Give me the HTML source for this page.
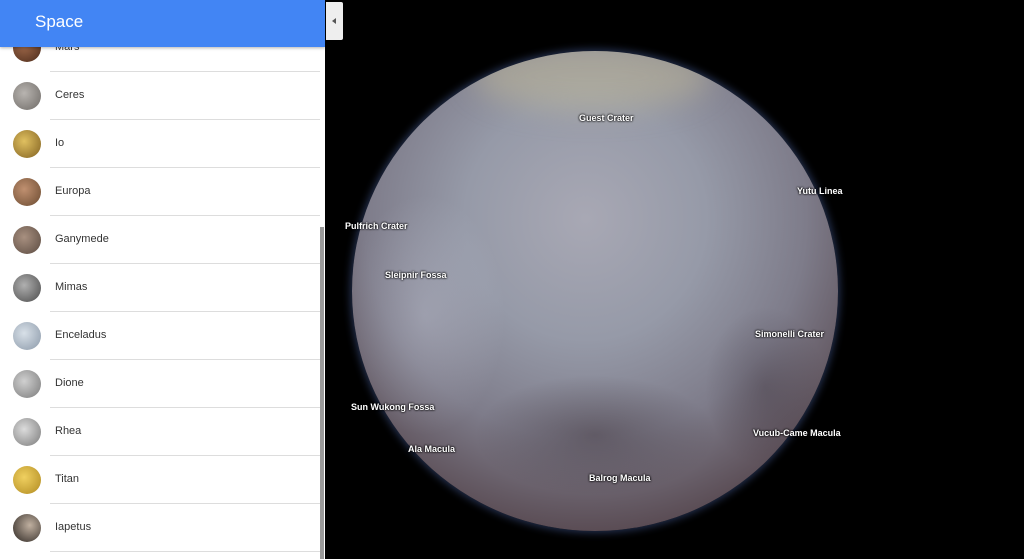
<!DOCTYPE html>
<html><head><style>
body{margin:0;width:1024px;height:559px;overflow:hidden;background:#000;font-family:"Liberation Sans",sans-serif;position:relative}
#side{position:absolute;left:0;top:0;width:325px;height:559px;background:#fff;overflow:hidden}
#hdr{position:absolute;left:0;top:0;width:325px;height:47px;background:#4285f4;color:#fff;font-size:17px;line-height:44px;padding-left:35px;box-sizing:border-box;z-index:2;box-shadow:0 1px 3px rgba(0,0,0,.3)}
.row{position:absolute;left:0;width:320px;height:48px}
.row .ic{position:absolute;left:13px;top:10px;width:28px;height:28px;border-radius:50%}
.row .t{position:absolute;left:55px;top:17px;font-size:11px;color:#333}
.row .d{position:absolute;left:50px;right:0;bottom:0;height:1px;background:#ddd}
#sb{position:absolute;left:320px;top:227px;width:4px;height:332px;background:#999}
#tg{position:absolute;left:326px;top:2px;width:17px;height:38px;background:#eee;border-radius:0 2px 2px 0}
#tg:after{content:"";position:absolute;left:6px;top:16px;border:3px solid transparent;border-right:4px solid #555;border-left:0}
#pl{position:absolute;left:352px;top:51px;width:486px;height:480px;border-radius:50%;overflow:hidden;
background:radial-gradient(circle at 48% 35%,#a8a8b4 0%,#969aa8 30%,#7e7c8a 55%,#5a4c54 78%,#2e2226 100%);
box-shadow:0 0 8px 2px rgba(60,80,130,.6)}
#pl:before{content:"";position:absolute;left:120px;top:-10px;width:240px;height:70px;border-radius:50%;background:rgba(200,190,150,.45);filter:blur(14px)}
#pl:after{content:"";position:absolute;left:0;top:0;width:100%;height:100%;background:
radial-gradient(ellipse 80px 120px at 15% 55%,rgba(200,205,220,.35),transparent),
radial-gradient(ellipse 120px 60px at 50% 80%,rgba(40,25,30,.35),transparent),
radial-gradient(ellipse 60px 80px at 85% 70%,rgba(50,40,50,.3),transparent)}
.lb{position:absolute;color:#fff;font-size:9px;font-weight:bold;text-shadow:0 0 2px #000,0 0 2px #000}
</style></head><body>
<div id="side">
<div class="row" style="top:24px"><div class="ic" style="background:radial-gradient(circle at 40% 40%,#a0694a,#4a2a1a)"></div><div class="t">Mars</div><div class="d"></div></div>
<div id="hdr">Space</div>
<div class="row" style="top:72px"><div class="ic" style="background:radial-gradient(circle at 40% 40%,#b8b4b0,#6e6a66)"></div><div class="t">Ceres</div><div class="d"></div></div>
<div class="row" style="top:120px"><div class="ic" style="background:radial-gradient(circle at 40% 40%,#e0c060,#806020)"></div><div class="t">Io</div><div class="d"></div></div>
<div class="row" style="top:168px"><div class="ic" style="background:radial-gradient(circle at 40% 40%,#c09070,#6a4a30)"></div><div class="t">Europa</div><div class="d"></div></div>
<div class="row" style="top:216px"><div class="ic" style="background:radial-gradient(circle at 40% 40%,#a89080,#5a4a40)"></div><div class="t">Ganymede</div><div class="d"></div></div>
<div class="row" style="top:264px"><div class="ic" style="background:radial-gradient(circle at 40% 40%,#b0b0b0,#4a4a4a)"></div><div class="t">Mimas</div><div class="d"></div></div>
<div class="row" style="top:312px"><div class="ic" style="background:radial-gradient(circle at 40% 40%,#d8e0e8,#8a98a8)"></div><div class="t">Enceladus</div><div class="d"></div></div>
<div class="row" style="top:360px"><div class="ic" style="background:radial-gradient(circle at 40% 40%,#d0d0d0,#7a7a7a)"></div><div class="t">Dione</div><div class="d"></div></div>
<div class="row" style="top:408px"><div class="ic" style="background:radial-gradient(circle at 40% 40%,#dcdcdc,#7a7a7a)"></div><div class="t">Rhea</div><div class="d"></div></div>
<div class="row" style="top:456px"><div class="ic" style="background:radial-gradient(circle at 40% 40%,#f0d060,#b08a20)"></div><div class="t">Titan</div><div class="d"></div></div>
<div class="row" style="top:504px"><div class="ic" style="background:radial-gradient(circle at 60% 40%,#c0b0a0,#2a2420)"></div><div class="t">Iapetus</div><div class="d"></div></div>
<div id="sb"></div>
</div>
<div id="tg"></div>
<div id="pl"></div>
<div class="lb" style="left:579px;top:113px">Guest Crater</div>
<div class="lb" style="left:797px;top:186px">Yutu Linea</div>
<div class="lb" style="left:345px;top:221px">Pulfrich Crater</div>
<div class="lb" style="left:385px;top:270px">Sleipnir Fossa</div>
<div class="lb" style="left:755px;top:329px">Simonelli Crater</div>
<div class="lb" style="left:351px;top:402px">Sun Wukong Fossa</div>
<div class="lb" style="left:753px;top:428px">Vucub-Came Macula</div>
<div class="lb" style="left:408px;top:444px">Ala Macula</div>
<div class="lb" style="left:589px;top:473px">Balrog Macula</div>
</body></html>
